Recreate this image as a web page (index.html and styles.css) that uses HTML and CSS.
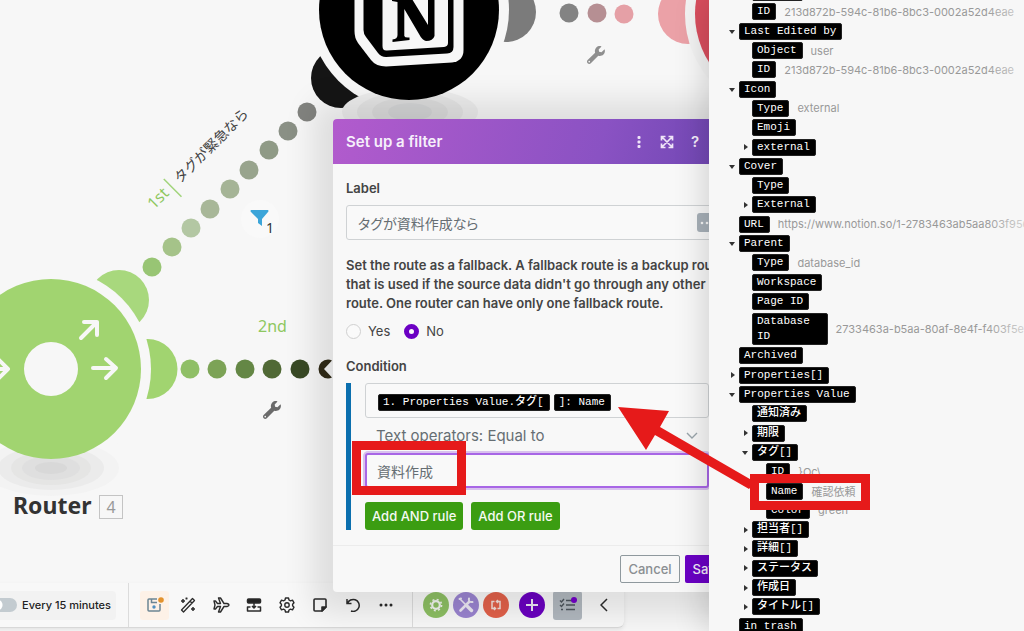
FILE: index.html
```html
<!DOCTYPE html>
<html lang="ja">
<head>
<meta charset="utf-8">
<meta name="viewport" content="width=device-width, initial-scale=1">
<title>Scenario editor</title>
<link rel="stylesheet" href="styles.css">
</head>
<body>
<div class="editor">
  <main class="canvas">
    <svg class="diagram" width="1024" height="631" viewBox="0 0 1024 631">
      <defs>
        <path id="wrench" d="M507.730 109.100c-2.240-9.030-13.540-12.090-20.120-5.510l-74.360 74.360-67.880-11.310-11.310-67.880 74.360-74.360c6.620-6.620 3.430-17.900-5.660-20.160-47.380-11.740-99.550.910-136.580 37.930-39.640 39.640-50.550 97.100-34.050 147.200L18.740 402.760c-24.990 24.990-24.990 65.510 0 90.500 24.990 24.990 65.510 24.990 90.500 0l213.210-213.210c50.120 16.710 107.470 5.680 147.370-34.220 37.070-37.070 49.700-89.320 37.910-136.730zM64 472c-13.250 0-24-10.750-24-24 0-13.260 10.750-24 24-24s24 10.740 24 24c0 13.250-10.750 24-24 24z"/>
      </defs>

      <!-- ground shadows -->
      <g>
        <ellipse cx="51" cy="468" rx="68" ry="28" fill="#f3f3f3"/>
        <ellipse cx="51" cy="468" rx="53" ry="22" fill="#ebebeb"/>
        <ellipse cx="51" cy="468" rx="40" ry="17" fill="#e5e5e4"/>
        <ellipse cx="51" cy="468" rx="29" ry="12" fill="#dfdfdf"/>
        <ellipse cx="51" cy="468" rx="16" ry="6" fill="#d8d8d8"/>
      </g>

      <!-- link dots -->
      <circle cx="307" cy="112" r="9.500" fill="#82837f"/>
      <circle cx="288" cy="131" r="9.500" fill="#8a9085"/>
      <circle cx="269" cy="150" r="9.500" fill="#8f9a86"/>
      <circle cx="249" cy="170" r="9.500" fill="#98a48d"/>
      <circle cx="230" cy="189" r="9.500" fill="#a5b496"/>
      <circle cx="210" cy="209" r="9.500" fill="#a8b798"/>
      <circle cx="191" cy="228" r="9.500" fill="#b3c7a3"/>
      <circle cx="172" cy="247" r="9.500" fill="#a5c389"/>
      <circle cx="152" cy="267" r="9.500" fill="#98c574"/>
      <circle cx="190" cy="369" r="9.500" fill="#8fbf66"/>
      <circle cx="217" cy="369" r="9.500" fill="#7ca356"/>
      <circle cx="245" cy="369" r="9.500" fill="#648745"/>
      <circle cx="272" cy="369" r="9.500" fill="#506935"/>
      <circle cx="300" cy="369" r="9.500" fill="#394a25"/>
      <circle cx="569" cy="13" r="9.500" fill="#838383"/>
      <circle cx="597" cy="13" r="9.500" fill="#b68f93"/>
      <circle cx="624" cy="14" r="9.500" fill="#e5a0a6"/>

      <!-- router -->
      <circle cx="119" cy="300" r="30" fill="#a8d87d"/>
      <circle cx="147.500" cy="369" r="30" fill="#a1d470"/>
      <circle cx="51" cy="369" r="100" fill="#f7f7f7" clip-path="inset(0 0 25px 0)"/>
      <circle cx="51" cy="369" r="90" fill="#a1d470"/>
      <circle cx="51" cy="369" r="27" fill="#f7f7f7"/>
      <g fill="none" stroke="#f7f7f7" stroke-width="4" stroke-linecap="round" stroke-linejoin="round">
        <path d="M81 338 97 322M84 322h13v13"/>
        <path d="M93 368h23M106 359l10 9-10 10"/>
        <path d="M-16 369h24M-2 359l10 10-10 10"/>
      </g>

      <!-- notion -->
      <circle cx="341" cy="78" r="30" fill="#151515"/>
      <circle cx="506" cy="12" r="30" fill="#7b7b7b"/>
      <circle cx="409" cy="10" r="100" fill="#f7f7f7"/>
      <ellipse cx="410" cy="112" rx="68" ry="24" fill="#ededed"/>
      <ellipse cx="410" cy="112" rx="53" ry="20" fill="#e4e4e4"/>
      <ellipse cx="410" cy="112" rx="38" ry="15" fill="#dcdcdc"/>
      <ellipse cx="410" cy="112" rx="22" ry="9" fill="#d4d5d6"/>
      <circle cx="409" cy="10" r="90" fill="#000"/>
      <path d="M354.500-40V31Q354.500 38 358 43L371 60Q376 66.500 386 66.500L452 62.500Q463.500 61 463.500 50V-40Z" fill="#f7f7f7"/>
      <path d="M363.500-40V30Q363.500 34 366 37L378 53Q381 57 386 57L447 53.500Q453.500 53 453.500 47V-40Z" fill="#000"/>
      <path d="M382.500-40V46Q382.500 51 387 50.500L444 47Q448 46.500 448 43V-40Z" fill="#f7f7f7"/>
      <path d="M397.500-12h7L412-1 428 25V-6h6.500V36Q433 41 426 41 422 40 419 34L404.300 9V36Q405 38 409.500 37.500V40L392.500 42V39.500Q397.500 39 397.500 35V2L392 1V-2Z" fill="#000"/>

      <!-- next module -->
      <circle cx="688" cy="14" r="30" fill="#eba1a7"/>
      <circle cx="785" cy="14" r="100" fill="#f3f3f3"/>
      <circle cx="785" cy="14" r="90" fill="#d94e5e"/>

      <use href="#wrench" transform="translate(587 46) scale(.035)" fill="#8f8f8f"/>
      <use href="#wrench" transform="translate(263 401) scale(.035)" fill="#6b6b6b"/>

      <!-- filter badge -->
      <circle cx="260" cy="219" r="19" fill="#f9f9f9"/>
      <path d="M251 210h17q1 1 0 2l-6 7v7l-4-3v-4l-7-7q-1-1 0-2Z" fill="#3ca5d9"/>
      <text class="badge-count" x="266" y="233">1</text>

      <!-- route labels -->
      <g transform="translate(156 208) rotate(-45)">
        <text class="route" x="-3" y="0">1st</text>
        <path d="M26-15V10" stroke="#a1d47a" stroke-width="1.500"/>
        <text class="route-name" x="34" y="0">タグが緊急なら</text>
      </g>
      <text class="route" x="258" y="332">2nd</text>

      <text class="module-name" x="13" y="514">Router</text>
      <rect x="99.500" y="495.500" width="23" height="23" fill="#f7f7f7" stroke="#c4c4c4"/>
      <text class="module-id" x="111" y="513" text-anchor="middle">4</text>
    </svg>

    <nav class="toolbar" aria-label="Scenario controls">
      <label class="schedule"><input type="checkbox" class="switch">Every 15 minutes</label>
      <div class="tools">
        <button class="tool tool-save" aria-label="Save">
          <svg width="18" height="16" viewBox="0 0 18 16" fill="none" stroke="#6c8594" stroke-width="1.500"><path d="M11 2H3q-1 0-1 1v10q0 1 1 1h10q1 0 1-1V7M5.500 2v3.500H11"/><circle cx="8" cy="10" r="1.700" fill="#4f8fc0" stroke="none"/><circle cx="15" cy="3" r="2.800" fill="#e3922d" stroke="none"/></svg>
        </button>
        <button class="tool" aria-label="Auto-align">
          <svg width="16" height="16" viewBox="0 0 16 16" fill="none" stroke="#2b2b2b" stroke-width="1.300" stroke-linejoin="round"><path d="M1.500 13 12.500 1.500l2 2L3.500 15ZM10 4l2 2"/><path d="M3 2v4M1 4h4M13 10v4M11 12h4M6.500.5v2M5.500 1.500h2" stroke-width="1.500"/></svg>
        </button>
        <button class="tool" aria-label="Explain flow">
          <svg width="18" height="16" viewBox="0 0 18 16" fill="none" stroke="#2b2b2b" stroke-width="1.400" stroke-linejoin="round"><path d="M2 4h1.500l2 2.500h3L6.500 1h2L12 6.500h3q2 .5 2 1.500t-2 1.500h-3L8.500 15h-2l2-5.500h-3L3.500 12H2l1-4Z"/></svg>
        </button>
        <button class="tool" aria-label="Inputs and outputs">
          <svg width="16" height="16" viewBox="0 0 16 16" fill="none" stroke="#2b2b2b" stroke-width="1.500" stroke-linejoin="round"><rect x="1.500" y="2" width="13" height="4" rx="1" fill="#222"/><path d="M8 6v4M6 9l2 2 2-2M4.500 10h-3v4h13v-4h-3"/></svg>
        </button>
        <button class="tool" aria-label="Settings">
          <svg width="16" height="16" viewBox="0 0 16 16" fill="none" stroke="#2b2b2b" stroke-width="1.400" stroke-linejoin="round"><path d="M6.500 1h3l.5 2 1.500.8 2-.6 1.500 2.600L13.600 7.200v1.600L15 10.200l-1.500 2.600-2-.6L10 13l-.5 2h-3L6 13l-1.500-.8-2 .6L1 10.200l1.400-1.400V7.200L1 5.800l1.500-2.600 2 .6L6 3Z"/><circle cx="8" cy="8" r="2.200"/></svg>
        </button>
        <button class="tool" aria-label="Notes">
          <svg width="14" height="14" viewBox="0 0 14 14" fill="none" stroke="#2b2b2b" stroke-width="1.600" stroke-linejoin="round"><path d="M2 1h10q1 0 1 1v7l-4 4H2q-1 0-1-1V2q0-1 1-1Z"/><path d="M13 9H9v4Z" fill="#2b2b2b"/></svg>
        </button>
        <button class="tool" aria-label="Undo">
          <svg width="14" height="14" viewBox="0 0 14 14" fill="none" stroke="#2b2b2b" stroke-width="1.500"><path d="M1 1v4.500h4.500M1.500 5.500A6 6 0 1 1 5 13"/></svg>
        </button>
        <button class="tool" aria-label="More">
          <svg width="14" height="14" viewBox="0 0 14 14" fill="#2b2b2b"><circle cx="2" cy="7" r="1.500"/><circle cx="7" cy="7" r="1.500"/><circle cx="12" cy="7" r="1.500"/></svg>
        </button>
      </div>
      <div class="apps">
        <button class="app app-flow" aria-label="Flow control">
          <svg width="14" height="14" viewBox="0 0 14 14" fill="none" stroke="#f1f4ee"><circle cx="7" cy="7" r="3.800" stroke-width="2.200"/><circle cx="7" cy="7" r="5.600" stroke-width="1.600" stroke-dasharray="2 2.400"/></svg>
        </button>
        <button class="app app-tools" aria-label="Tools">
          <svg width="18" height="18" viewBox="0 0 18 18" fill="none" stroke="#ece9f4" stroke-linecap="round"><path d="M3 3l6 6" stroke-width="1.600"/><path d="M10.500 10.500l4 4" stroke-width="3.400"/><path d="M3.500 14.500 12 6" stroke-width="2.600"/><path d="M12 2.500q-1 4 3.500 3.500" stroke-width="2"/><path d="M2.500 3l1.500-.5" stroke-width="2"/></svg>
        </button>
        <button class="app app-parser" aria-label="Text parser">
          <svg width="12" height="12" viewBox="0 0 12 12" fill="none" stroke="#f3dfda" stroke-width="1.500"><path d="M4.500 2.500H2v7h3M4 8l1.500 1.500L4 11M7.500 9.500H10v-7H7M8 1 6.500 2.500 8 4"/></svg>
        </button>
        <button class="app app-add" aria-label="Add module">
          <svg width="14" height="14" viewBox="0 0 14 14" stroke="#ece6f5" stroke-width="2"><path d="M7 1v12M1 7h12"/></svg>
        </button>
        <button class="tool tool-list" aria-label="Checklist">
          <svg width="18" height="16" viewBox="0 0 18 16" fill="none" stroke="#4e565d" stroke-width="1.400"><path d="M7 3.500h6M7 8h9M7 12.500h9M1 3.500 2.500 5 5 2M1 8l1.500 1.500L5 6.500M2 12.500h2"/><circle cx="15" cy="3" r="3" fill="#7300c8" stroke="none"/></svg>
        </button>
        <button class="tool" aria-label="Collapse">
          <svg width="8" height="14" viewBox="0 0 8 14" fill="none" stroke="#2b2b2b" stroke-width="1.500"><path d="M7 1 1 7l6 6"/></svg>
        </button>
      </div>
    </nav>

    <form class="dialog" aria-labelledby="dialog-title">
      <header class="dialog-head">
        <h2 id="dialog-title">Set up a filter</h2>
        <button type="button" class="head-btn" aria-label="Menu"><svg width="14" height="14" viewBox="0 0 14 14" fill="#efe5f8"><rect x="5.500" y="1" width="3" height="3" rx="1"/><rect x="5.500" y="5.500" width="3" height="3" rx="1"/><rect x="5.500" y="10" width="3" height="3" rx="1"/></svg></button>
        <button type="button" class="head-btn" aria-label="Expand"><svg width="14" height="14" viewBox="0 0 14 14" fill="none" stroke="#efe5f8" stroke-width="1.700"><path d="M1.500 5.500v-4h4M8.500 1.500h4v4M12.500 8.500v4h-4M5.500 12.500h-4v-4M2 2l10 10M12 2 2 12"/></svg></button>
        <button type="button" class="head-btn" aria-label="Help">?</button>
      </header>
      <div class="dialog-body">
        <label class="field-title" for="filter-label">Label</label>
        <div class="label-field">
          <input class="text-input" id="filter-label" type="text" value="タグが資料作成なら">
          <button type="button" class="more" aria-label="Options"><svg width="14" height="4" viewBox="0 0 14 4" fill="#f7f7f7"><circle cx="2" cy="2" r="1.300"/><circle cx="7" cy="2" r="1.300"/><circle cx="12" cy="2" r="1.300"/></svg></button>
        </div>
        <fieldset class="fallback">
          <legend>Set the route as a fallback. A fallback route is a backup route that is used if the source data didn't go through any other route. One router can have only one fallback route.</legend>
          <label><input type="radio" name="fallback">Yes</label>
          <label><input type="radio" name="fallback" checked>No</label>
        </fieldset>
        <h3 class="field-title">Condition</h3>
        <div class="rules">
          <div class="token-field" role="textbox" aria-label="Value">
            <span class="token">1. Properties Value.タグ[</span>
            <span class="token">]: Name</span>
          </div>
          <div class="operator">
            <select aria-label="Operator"><option>Text operators: Equal to</option></select>
            <svg width="12" height="7" viewBox="0 0 12 7" fill="none" stroke="#9aa5ab" stroke-width="1.400"><path d="M1 1l5 5 5-5"/></svg>
          </div>
          <input class="text-input focused" type="text" value="資料作成" aria-label="Compared value">
          <div class="rule-buttons">
            <button type="button">Add AND rule</button>
            <button type="button">Add OR rule</button>
          </div>
        </div>
      </div>
      <footer class="dialog-foot">
        <button type="button" class="cancel">Cancel</button>
        <button type="button" class="save">Save</button>
      </footer>
    </form>

    <svg class="notch" width="15" height="20" viewBox="0 0 15 20"><path d="M10 .5a9.500 9.500 0 0 0 0 19q2 0 4-1L6 10l8-8.500q-2-1-4-1Z" fill="#2d2816"/></svg>
  </main>

  <aside class="panel">
    <ul class="tree">
      <li class="l1"><span class="token">Object</span></li>
      <li class="l1"><span class="token">ID</span><span class="value">213d872b-594c-81b6-8bc3-0002a52d4eae</span></li>
      <li class="open"><span class="token">Last Edited by</span></li>
      <li class="l1"><span class="token">Object</span><span class="value">user</span></li>
      <li class="l1"><span class="token">ID</span><span class="value">213d872b-594c-81b6-8bc3-0002a52d4eae</span></li>
      <li class="open"><span class="token">Icon</span></li>
      <li class="l1"><span class="token">Type</span><span class="value">external</span></li>
      <li class="l1"><span class="token">Emoji</span></li>
      <li class="l1 shut"><span class="token">external</span></li>
      <li class="open"><span class="token">Cover</span></li>
      <li class="l1"><span class="token">Type</span></li>
      <li class="l1 shut"><span class="token">External</span></li>
      <li><span class="token">URL</span><span class="value">https://www.notion.so/1-2783463ab5aa803f956</span></li>
      <li class="open"><span class="token">Parent</span></li>
      <li class="l1"><span class="token">Type</span><span class="value">database_id</span></li>
      <li class="l1"><span class="token">Workspace</span></li>
      <li class="l1"><span class="token">Page ID</span></li>
      <li class="l1 tall"><span class="token">Database ID</span><span class="value">2733463a-b5aa-80af-8e4f-f403f5e</span></li>
      <li><span class="token">Archived</span></li>
      <li class="shut"><span class="token">Properties[]</span></li>
      <li class="open"><span class="token">Properties Value</span></li>
      <li class="l1"><span class="token">通知済み</span></li>
      <li class="l1 shut"><span class="token">期限</span></li>
      <li class="l1 open"><span class="token">タグ[]</span></li>
      <li class="l2"><span class="token">ID</span><span class="value">}Oc\</span></li>
      <li class="l2"><span class="token">Name</span><span class="value">確認依頼</span></li>
      <li class="l2"><span class="token">Color</span><span class="value">green</span></li>
      <li class="l1 shut"><span class="token">担当者[]</span></li>
      <li class="l1 shut"><span class="token">詳細[]</span></li>
      <li class="l1 shut"><span class="token">ステータス</span></li>
      <li class="l1 shut"><span class="token">作成日</span></li>
      <li class="l1 shut"><span class="token">タイトル[]</span></li>
      <li><span class="token">in trash</span></li>
    </ul>
  </aside>

  <svg class="marks" width="1024" height="631" viewBox="0 0 1024 631" aria-hidden="true">
    <g fill="none" stroke="#e61a1a" stroke-width="9">
      <rect x="356.500" y="445.500" width="105" height="45"/>
      <rect x="754.500" y="478.500" width="111" height="27"/>
    </g>
    <path d="M618 407 669 411 660 427 755 482 749 489 655 435 646 450Z" fill="#e61a1a"/>
  </svg>
</div>
</body>
</html>
```
FILE: styles.css
```css
*, *::before, *::after { box-sizing: border-box; }

body {
  margin: 0;
  background: #f7f7f7;
  color: #444;
  font-family: Inter, "Noto Sans CJK JP", sans-serif;
  font-size: 13px;
}

button, input, select { font: inherit; color: inherit; margin: 0; }
button { border: 0; padding: 0; background: none; }
h2, h3 { margin: 0; }

.editor {
  position: relative;
  display: grid;
  grid-template-columns: 1fr 315px;
  height: 100vh;
  overflow: hidden;
}

.canvas { position: relative; overflow: hidden; min-width: 0; }
.diagram { position: absolute; left: 0; top: 0; }
.marks { position: absolute; left: 0; top: 0; pointer-events: none; z-index: 5; }
.notch { position: absolute; left: 318px; top: 359px; }

.route { font: 16px "Noto Sans", sans-serif; fill: #8ec760; }
.route-name { font: 14px "Noto Sans CJK JP", sans-serif; fill: #444; }
.badge-count { font: 14px "Noto Sans", sans-serif; fill: #333; }
.module-name { font: bold 23px "Noto Sans", sans-serif; fill: #333; }
.module-id { font: 16px "Noto Sans", sans-serif; fill: #999; }

/* toolbar */
.toolbar {
  position: absolute;
  left: -24px;
  bottom: 3px;
  display: flex;
  align-items: stretch;
  height: 45px;
  padding-right: 6px;
  background: #f8f8f8;
  border-bottom: 1px solid #d8d8d8;
  border-radius: 0 6px 6px 0;
  box-shadow: 0 2px 4px rgba(0, 0, 0, .08);
}
.schedule {
  display: flex;
  align-items: center;
  align-self: center;
  gap: 5px;
  height: 29px;
  margin-right: 12px;
  padding: 0 5px 0 16px;
  border-radius: 4px;
  background: #f2f2f2;
  color: #222;
  font-size: 11px;
  font-weight: 500;
}
.switch {
  appearance: none;
  width: 25px;
  height: 14px;
  border-radius: 7px;
  background: radial-gradient(circle at 5px 7px, #fff 5px, #c3cbd0 6px);
}
.tools, .apps { display: flex; align-items: center; gap: 4px; border-left: 1px solid #dcdcdc; }
.tools { padding: 0 12px 0 11px; }
.apps { padding-left: 10px; }
.tool {
  display: grid;
  place-items: center;
  width: 29px;
  height: 29px;
  border-radius: 3px;
}
.tool-save { background: #fdf1e7; }
.tool-list { margin: 0 3px 0 4px; background: #b1b8bf; }
.app { display: grid; place-items: center; width: 26px; height: 26px; border-radius: 50%; }
.app-flow { background: #8dbf63; }
.app-tools { background: #9a84d0; }
.app-parser { background: #e2614a; }
.app-add { margin-left: 6px; background: #6a00c0; }

/* dialog */
.dialog {
  position: absolute;
  left: 333px;
  top: 119px;
  width: 412px;
  border-radius: 4px;
  background: #f8f8f8;
  box-shadow: 0 2px 30px 20px rgba(0, 0, 0, .1);
}
.dialog-head {
  display: flex;
  align-items: center;
  gap: 14px;
  height: 45px;
  padding: 0 43px 0 13px;
  border-radius: 4px 4px 0 0;
  background: linear-gradient(105deg, #b25bcd, #8a52c3 65%, #6b45b0);
  color: #f6effb;
}
.dialog-head h2 { flex: 1; font-size: 15px; font-weight: 600; line-height: 20px; }
.head-btn { display: grid; place-items: center; width: 14px; height: 20px; font-size: 15px; font-weight: 600; }

.dialog-body { padding: 15px 13px; }
.field-title { display: block; font-size: 13px; font-weight: 600; line-height: 18px; }
.text-input {
  display: block;
  width: 100%;
  height: 35px;
  padding: 0 11px;
  border: 1px solid #cfd2d4;
  border-radius: 3px;
  background: #f9f9f9;
  color: #666e73;
  font-size: 14px;
}
.label-field { position: relative; margin: 8px 0 16px; font-feature-settings: "palt"; }
.more {
  position: absolute;
  right: 16px;
  top: 8px;
  width: 19px;
  height: 19px;
  border-radius: 3px;
  background: #a8b1b9;
  display: grid;
  place-items: center;
}
.fallback {
  display: flex;
  flex-wrap: wrap;
  gap: 14px;
  margin: 0 0 16px;
  padding: 0;
  border: 0;
}
.fallback legend { padding: 0; margin-bottom: 8px; font-size: 13px; font-weight: 600; line-height: 19px; }
.fallback label { display: flex; align-items: center; gap: 7px; height: 20px; }
.fallback input {
  appearance: none;
  width: 15px;
  height: 15px;
  border: 1px solid #d0d0d0;
  border-radius: 50%;
  background: #fafafa;
}
.fallback input:checked { border: 5px solid #6c00c4; }

.rules { margin-top: 8px; padding: 0 23px 0 14px; border-left: 5px solid #0b6fae; }
.token-field {
  display: flex;
  align-items: center;
  gap: 4px;
  height: 35px;
  padding: 3px 12px 0;
  border: 1px solid #cfd2d4;
  border-radius: 3px;
  background: #f9f9f9;
}
.token {
  display: inline-block;
  padding: 0 5px 0 4px;
  border: 1px solid #222;
  border-radius: 2px;
  background: #000;
  color: #fff;
  font: 500 11px/15px "Courier New", "Liberation Mono", "Noto Sans CJK JP", monospace;
}
.operator { display: flex; align-items: center; height: 35px; padding: 0 11px; color: #666e73; font-size: 15px; }
.operator select { flex: 1; height: 24px; padding: 0; border: 0; background: none; appearance: none; }
.focused { padding: 0 10px; border: 2px solid #a866e6; box-shadow: 0 0 0 2px #d9c2ee; }
.rule-buttons { display: flex; gap: 8px; padding-top: 14px; }
.rule-buttons button {
  height: 28px;
  padding: 0 7px;
  border-radius: 3px;
  background: #3b9d12;
  color: #f5faf2;
  font-weight: 500;
}
.dialog-foot {
  display: flex;
  justify-content: flex-end;
  gap: 5px;
  padding: 9px 14px;
  border-top: 1px solid #ececec;
}
.dialog-foot button { height: 28px; padding: 0 8px; border-radius: 2px; font-weight: 500; }
.dialog-foot .cancel { padding: 0 7px; border: 1px solid #8f999e; color: #8a8f92; }
.dialog-foot .save { background: #6a00c4; color: #f3ecfa; }

/* data panel */
.panel {
  position: relative;
  display: flex;
  flex-direction: column;
  min-width: 0;
  background: #f7f7f7;
  box-shadow: -4px 0 30px rgba(0, 0, 0, .16);
}
.panel::after {
  content: "";
  position: absolute;
  inset: 0 0 0 auto;
  width: 40px;
  background: linear-gradient(90deg, rgba(247, 247, 247, 0), rgba(247, 247, 247, .6));
}
.tree {
  flex: 1;
  display: flex;
  flex-direction: column;
  margin: -17px 0 -5px;
  padding: 0;
  list-style: none;
}
.tree li {
  flex: 1 1 16px;
  display: flex;
  align-items: center;
  gap: 8px;
  min-height: 0;
  padding-left: 30px;
  white-space: nowrap;
}
.tree .l1 { padding-left: 43px; }
.tree .l2 { padding-left: 57px; }
.tree .tall { flex-basis: 32px; }
.tall .token { width: 76px; white-space: normal; }
.tree .open::before, .tree .shut::before { content: ""; flex: none; border: 3px solid transparent; }
.tree .open::before { width: 6px; margin: 1px -4px 0 -10px; border-top: 4px solid #333; border-bottom: 0; }
.tree .shut::before { width: 4px; margin: 0 -4px 0 -8px; border-left: 4px solid #333; border-right: 0; }
.value { color: #999; font-size: 11px; }
```
